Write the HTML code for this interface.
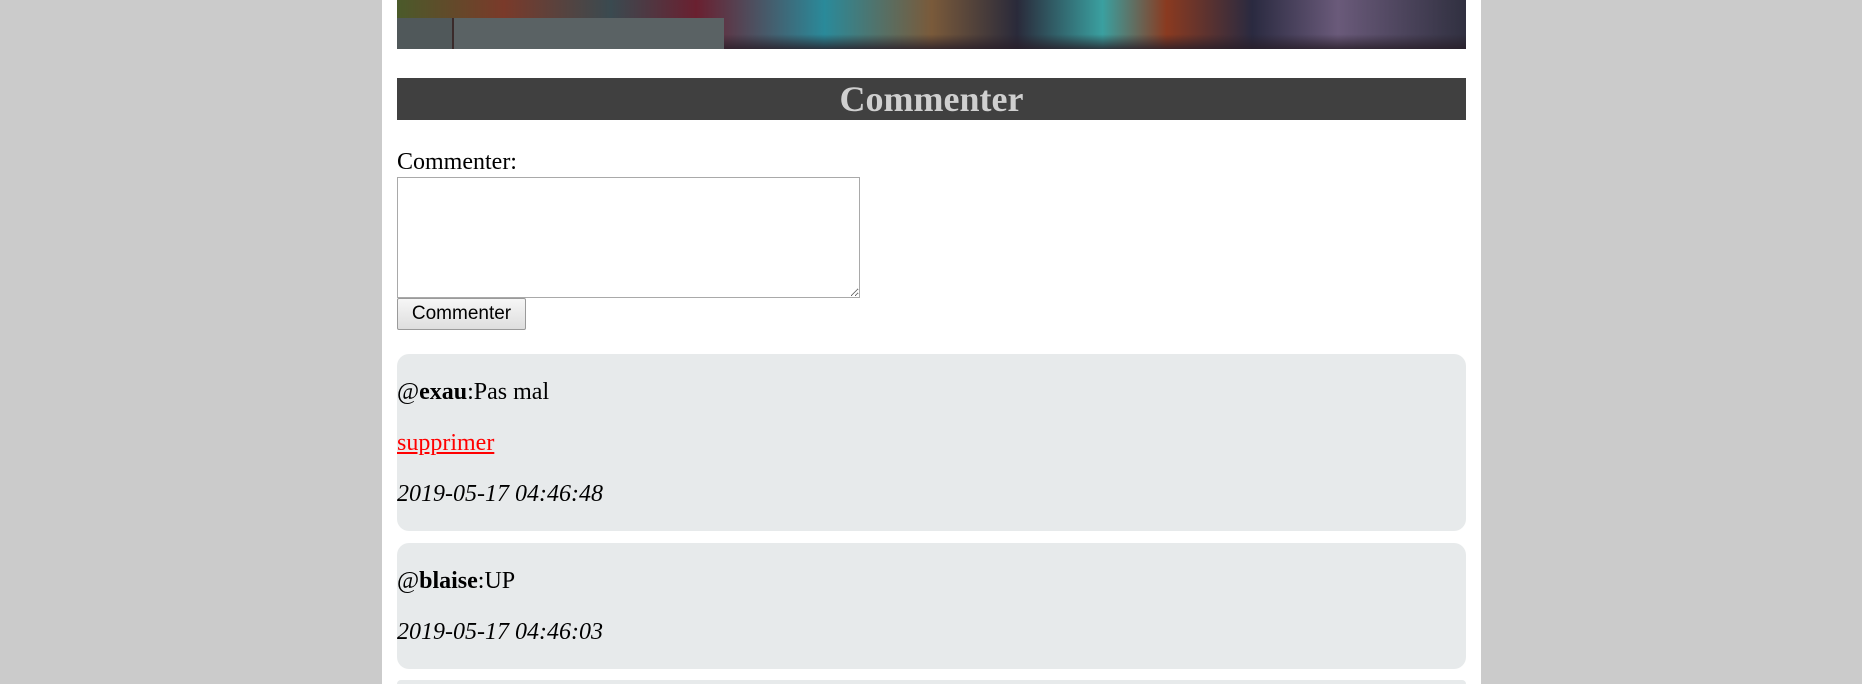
<!DOCTYPE html>
<html><head><meta charset="utf-8"><style>
html,body{margin:0;padding:0;height:684px;overflow:hidden;}
body{width:1862px;background:#cbcbcb;font-family:"Liberation Serif",serif;font-size:24px;position:relative;}
.page{position:absolute;left:382px;top:0;width:1099px;height:684px;background:#fff;}
.img{position:absolute;left:397px;top:0;width:1069px;height:49px;overflow:hidden;
background:
linear-gradient(180deg,rgba(0,0,0,0) 70%,rgba(40,30,40,.8) 100%),
linear-gradient(90deg,#4a5a2a 0%,#7a3a2a 10%,#3a4a50 20%,#6a2030 28%,#2a8a9a 40%,#7a5a3a 50%,#2a2a3a 58%,#3aa0a0 66%,#8a3a20 72%,#2a2a40 80%,#6a5a7a 88%,#303040 100%);}
.box1{position:absolute;left:0;top:18px;width:308px;height:31px;background:#50585a;}
.box2{position:absolute;left:55px;top:18px;width:270px;height:31px;background:#5a6264;border-left:2px solid #3a2a2a;}
.h{position:absolute;left:397px;top:78px;width:1069px;height:42px;background:#404040;color:#cfcfcf;font-weight:bold;font-size:36px;text-align:center;line-height:42px;}
.lbl{position:absolute;left:397px;top:149px;line-height:26px;}
textarea{position:absolute;left:397px;top:177px;width:463px;height:121px;box-sizing:border-box;border:1px solid #a9a9a9;margin:0;padding:0;resize:both;}
button{position:absolute;left:397px;top:298px;width:129px;height:32px;font-family:"Liberation Sans",sans-serif;font-size:19px;border:1px solid #9a9a9a;border-radius:2px;background:linear-gradient(#f6f6f6,#dedede);color:#000;padding:0;}
.c{position:absolute;left:397px;width:1069px;background:#e7eaeb;border-radius:12px;}
.c p{margin:25px 0;line-height:26px;}
a{color:#f00;}
</style></head><body>
<div class="page"></div>
<div class="img"><div class="box1"></div><div class="box2"></div></div>
<div class="h">Commenter</div>
<div class="lbl">Commenter:</div>
<textarea></textarea>
<button>Commenter</button>
<div class="c" style="top:354px;height:177px;overflow:hidden">
<p>@<b>exau</b>:Pas mal</p><p><a href="#">supprimer</a></p><p><i>2019-05-17 04:46:48</i></p></div>
<div class="c" style="top:543px;height:126px;overflow:hidden">
<p>@<b>blaise</b>:UP</p><p><i>2019-05-17 04:46:03</i></p></div>
<div class="c" style="top:680px;height:4px;border-radius:12px 12px 0 0"></div>
</body></html>
